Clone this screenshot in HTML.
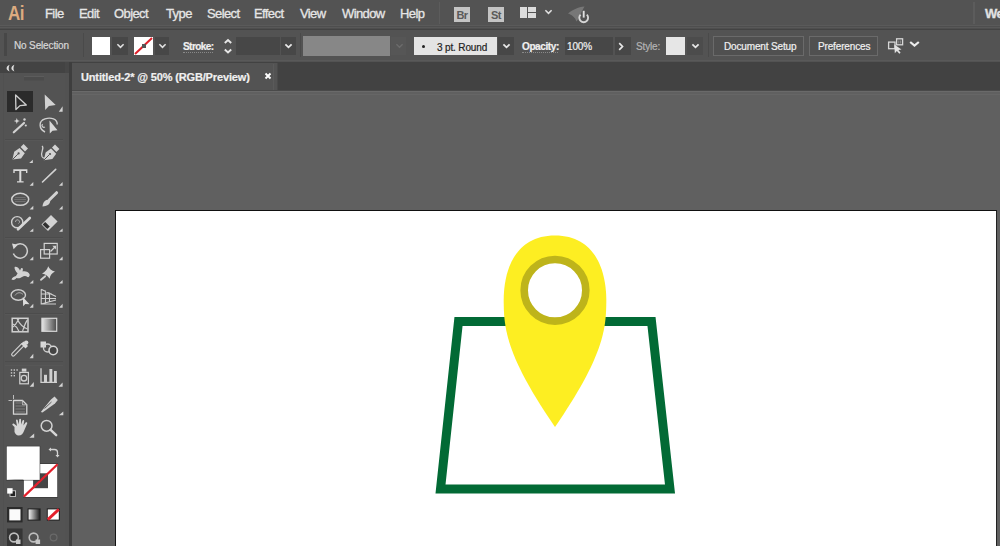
<!DOCTYPE html>
<html><head><meta charset="utf-8">
<style>
*{margin:0;padding:0;box-sizing:border-box}
html,body{width:1000px;height:546px;overflow:hidden}
body{background:#535353;font-family:"Liberation Sans",sans-serif;position:relative;color:#e8e8e8}
.a{position:absolute}
.m{position:absolute;top:6px;font-size:13px;line-height:16px;color:#e6e6e6;white-space:nowrap;letter-spacing:-0.6px;-webkit-text-stroke:0.3px #e6e6e6}
.c{position:absolute;font-size:10px;line-height:12px;color:#e8e8e8;white-space:nowrap;letter-spacing:-0.15px;-webkit-text-stroke:0.2px currentColor}
.dk{position:absolute;background:#474747}
svg{position:absolute;overflow:visible}
</style></head><body>

<!-- ===== MENU BAR ===== -->
<div class="a" style="left:0;top:0;width:1000px;height:25px;background:#535353"></div>
<div class="a" style="left:0;top:25px;width:1000px;height:1px;background:#5a5a5a"></div>
<div class="a" style="left:0;top:26px;width:1000px;height:1px;background:#4e4e4e"></div>
<div class="a" style="left:0;top:27px;width:1000px;height:1px;background:#585858"></div>
<div class="a" style="left:0;top:28px;width:1000px;height:1px;background:#4e4e4e"></div>
<div class="a" style="left:0;top:29px;width:1000px;height:1px;background:#434343"></div>

<div class="a" style="left:8px;top:2px;font-size:20px;line-height:22px;color:#dcab80;font-weight:bold;letter-spacing:-0.5px;transform:scaleX(0.85);transform-origin:0 0">Ai</div>
<div class="m" style="left:45px">File</div>
<div class="m" style="left:79px">Edit</div>
<div class="m" style="left:114px">Object</div>
<div class="m" style="left:166px">Type</div>
<div class="m" style="left:207px">Select</div>
<div class="m" style="left:254px">Effect</div>
<div class="m" style="left:300px">View</div>
<div class="m" style="left:342px">Window</div>
<div class="m" style="left:400px">Help</div>
<div class="a" style="left:439px;top:2px;width:1px;height:22px;background:#5c5c5c"></div>

<!-- Br / St -->
<div class="a" style="left:454px;top:7px;width:16px;height:15px;background:#c4c4c4;color:#5a5a5a;font-size:11px;line-height:16px;text-align:center;font-weight:bold;letter-spacing:-0.5px">Br</div>
<div class="a" style="left:488px;top:7px;width:16px;height:15px;background:#c4c4c4;color:#5a5a5a;font-size:11px;line-height:16px;text-align:center;font-weight:bold;letter-spacing:-0.5px">St</div>
<!-- layout icon -->
<div class="a" style="left:520px;top:7px;width:7px;height:11px;background:#dcdcdc"></div>
<div class="a" style="left:528px;top:7px;width:8px;height:5px;background:#dcdcdc"></div>
<div class="a" style="left:528px;top:13px;width:8px;height:5px;background:#dcdcdc"></div>
<svg style="left:544px;top:9px" width="9" height="6"><path d="M1.4 1.3 L4.5 4.3 L7.6 1.3" stroke="#e0e0e0" stroke-width="1.6" fill="none"/></svg>
<!-- sync icon -->
<svg style="left:560px;top:2px" width="36" height="24">
 <path d="M8 11.5 C12 8 18 5 24.5 4.5 L22 9 L19 16 L16.5 19.5 C15 15 12 13 8 11.5Z" fill="#777"/>
 <path d="M20.6 12.7 A4.4 4.4 0 1 0 26.8 12.7" stroke="#d6d6d6" stroke-width="1.9" fill="none"/>
 <path d="M23.7 8.8 V15.6" stroke="#e0e0e0" stroke-width="1.9"/>
</svg>

<div class="a" style="left:973px;top:2px;width:2px;height:22px;background:#5c5c5c"></div>
<div class="m" style="left:985px;font-weight:bold;color:#e0e0e0">We</div>

<!-- ===== CONTROL BAR ===== -->
<div class="a" style="left:0;top:30px;width:1000px;height:32px;background:#535353"></div>
<div class="a" style="left:0;top:60px;width:1000px;height:1px;background:#595959"></div>

<div class="a" style="left:4px;top:33px;width:3px;height:23px;background:#474747"></div>
<div class="c" style="left:14px;top:40px;color:#d8d8d8">No Selection</div>
<div class="a" style="left:83px;top:33px;width:1px;height:24px;background:#4a4a4a"></div>

<!-- fill swatch -->
<div class="a" style="left:92px;top:37px;width:18px;height:18px;background:#fff"></div>
<div class="dk" style="left:112px;top:37px;width:16px;height:18px"></div>
<svg style="left:116px;top:43px" width="9" height="6"><path d="M1.4 1.3 L4.5 4.3 L7.6 1.3" stroke="#e0e0e0" stroke-width="1.6" fill="none"/></svg>
<!-- stroke swatch -->
<div class="a" style="left:134px;top:37px;width:19px;height:18px;background:#fff"></div>
<svg style="left:134px;top:37px" width="19" height="18"><path d="M1 17 L18 1" stroke="#e0202a" stroke-width="2"/><rect x="8" y="7" width="4" height="4" fill="#555"/></svg>
<div class="dk" style="left:155px;top:37px;width:14px;height:18px"></div>
<svg style="left:158px;top:43px" width="9" height="6"><path d="M1.4 1.3 L4.5 4.3 L7.6 1.3" stroke="#e0e0e0" stroke-width="1.6" fill="none"/></svg>

<div class="c" style="left:183px;top:41px;font-weight:bold;color:#f0f0f0;letter-spacing:-0.55px">Stroke:</div>
<div class="a" style="left:183px;top:52px;width:30px;border-top:1px dotted #888"></div>
<svg style="left:223px;top:38px" width="10" height="18"><path d="M1.8 5 L5 2 L8.2 5 M1.8 11.5 L5 14.5 L8.2 11.5" stroke="#e6e6e6" stroke-width="1.9" fill="none"/></svg>
<div class="dk" style="left:236px;top:37px;width:44px;height:18px"></div>
<div class="dk" style="left:281px;top:37px;width:15px;height:18px;background:#474747"></div>
<svg style="left:284px;top:43px" width="9" height="6"><path d="M1.4 1.3 L4.5 4.3 L7.6 1.3" stroke="#e8e8e8" stroke-width="1.8" fill="none"/></svg>
<div class="a" style="left:300px;top:33px;width:1px;height:24px;background:#4a4a4a"></div>

<div class="a" style="left:303px;top:36px;width:87px;height:20px;background:#878787"></div>
<div class="a" style="left:391px;top:37px;width:15px;height:18px;background:#565656"></div>
<svg style="left:395px;top:43px" width="9" height="6"><path d="M1.4 1.3 L4.5 4.3 L7.6 1.3" stroke="#6c6c6c" stroke-width="1.4" fill="none"/></svg>

<div class="a" style="left:414px;top:37px;width:83px;height:18px;background:#e4e4e4"></div>
<div class="a" style="left:422px;top:45px;width:3px;height:3px;border-radius:2px;background:#222"></div>
<div class="c" style="left:437px;top:42px;color:#222">3 pt. Round</div>
<div class="dk" style="left:498px;top:37px;width:16px;height:18px"></div>
<svg style="left:502px;top:43px" width="9" height="6"><path d="M1.4 1.3 L4.5 4.3 L7.6 1.3" stroke="#e8e8e8" stroke-width="1.8" fill="none"/></svg>

<div class="c" style="left:522px;top:41px;font-weight:bold;color:#f0f0f0;letter-spacing:-0.4px">Opacity:</div>
<div class="a" style="left:522px;top:52px;width:36px;border-top:1px dotted #888"></div>
<div class="dk" style="left:565px;top:37px;width:48px;height:18px"></div>
<div class="c" style="left:567px;top:41px;color:#f0f0f0">100%</div>
<div class="dk" style="left:615px;top:37px;width:16px;height:18px"></div>
<svg style="left:618px;top:42px" width="6" height="9"><path d="M1.2 1.2 L4.5 4.5 L1.2 7.8" stroke="#e8e8e8" stroke-width="1.7" fill="none"/></svg>
<div class="c" style="left:636px;top:41px;color:#b4b4b4">Style:</div>
<div class="a" style="left:666px;top:37px;width:19px;height:18px;background:#e6e6e6"></div>
<div class="dk" style="left:687px;top:37px;width:16px;height:18px;background:#4c4c4c"></div>
<svg style="left:691px;top:43px" width="9" height="6"><path d="M1.4 1.3 L4.5 4.3 L7.6 1.3" stroke="#e8e8e8" stroke-width="1.8" fill="none"/></svg>
<div class="a" style="left:708px;top:33px;width:1px;height:24px;background:#4a4a4a"></div>

<div class="a" style="left:713px;top:36px;width:91px;height:20px;border:1px solid #6a6a6a;background:#505050"></div>
<div class="c" style="left:724px;top:41px;color:#f0f0f0">Document Setup</div>
<div class="a" style="left:809px;top:36px;width:69px;height:20px;border:1px solid #6a6a6a;background:#505050"></div>
<div class="c" style="left:818px;top:41px;color:#f0f0f0">Preferences</div>
<svg style="left:880px;top:32px" width="44" height="26">
 <rect x="8.6" y="10.1" width="6.4" height="6.6" stroke="#d6d6d6" stroke-width="1.3" fill="none"/>
 <rect x="16.6" y="6.8" width="6" height="6" stroke="#d6d6d6" stroke-width="1.3" fill="none"/>
 <path d="M18.8 8.5 V11.5 M20.6 8.5 V11.5" stroke="#9a9a9a" stroke-width="0.8"/>
 <path d="M14.3 12.4 L14.8 21.2 L16.9 19 L19.3 21.8 L20.6 20.7 L18.4 18 L21.5 17.6 Z" fill="#e2e2e2"/>
 <path d="M30.2 10 L34.5 13.6 L38.8 10" stroke="#ececec" stroke-width="2.2" fill="none"/>
</svg>

<!-- ===== TAB BAR ===== -->
<div class="a" style="left:65px;top:62px;width:935px;height:28px;background:#424242"></div>
<div class="a" style="left:72px;top:63px;width:206px;height:27px;background:#535353"></div>
<div class="c" style="left:81px;top:70px;font-size:11px;line-height:14px;font-weight:bold;color:#f0f0f0">Untitled-2* @ 50% (RGB/Preview)</div>
<svg style="left:264px;top:72px" width="8" height="8"><path d="M1.5 1.5 L6.5 6.5 M6.5 1.5 L1.5 6.5" stroke="#fff" stroke-width="1.9"/></svg>
<div class="a" style="left:273px;top:64px;width:1px;height:26px;background:#5a5a5a"></div>
<div class="a" style="left:277px;top:63px;width:1px;height:27px;background:#4a4a4a"></div>
<div class="a" style="left:65px;top:90px;width:935px;height:1px;background:#4a4a4a"></div>

<!-- ===== CANVAS ===== -->
<div class="a" style="left:72px;top:91px;width:928px;height:455px;background:#606060"></div>
<div class="a" style="left:72px;top:91px;width:928px;height:1px;background:#6a6a6a"></div>
<div class="a" style="left:72px;top:94px;width:928px;height:1px;background:#666"></div>
<div class="a" style="left:115px;top:210px;width:882px;height:340px;background:#fff;border-left:1px solid #111;border-top:1px solid #111;border-right:1px solid #222"></div>

<!-- artwork -->
<svg style="left:0;top:0" width="1000" height="546">
 <path d="M458.5 321.5 L651.5 321.5 L670 489 L440.5 489 Z" stroke="#026a35" stroke-width="9" fill="none" stroke-linejoin="miter"/>
 <path d="M555 427 C603.74 355.85 606.3 328.86 606.3 300 C606.3 282.7 601.95 235.4 555 235.4 C508.05 235.4 503.7 282.7 503.7 300 C503.7 328.86 506.26 355.85 555 427 Z" fill="#fdee22"/>
 <circle cx="555" cy="290.3" r="30.8" stroke="#beb41a" stroke-width="7.6" fill="#fff"/>
</svg>

<!-- ===== LEFT TOOL PANEL ===== -->
<div class="a" style="left:0;top:62px;width:65px;height:484px;background:#535353"></div>
<div class="a" style="left:0;top:62px;width:65px;height:11px;background:#434343"></div>
<div class="a" style="left:65px;top:73px;width:4px;height:473px;background:#525252"></div>
<div class="a" style="left:65px;top:62px;width:4px;height:11px;background:#474747"></div>
<div class="a" style="left:69px;top:62px;width:3px;height:484px;background:#3e3e3e"></div>
<div class="a" style="left:3px;top:73px;width:1px;height:473px;background:#505050"></div>
<svg style="left:0;top:0" width="72" height="546">
 <defs>
  <linearGradient id="gr" x1="0" x2="1" y1="0" y2="0"><stop offset="0" stop-color="#e8e8e8"/><stop offset="1" stop-color="#4a4a4a"/></linearGradient>
  <linearGradient id="gr2" x1="0" x2="1" y1="0" y2="0"><stop offset="0" stop-color="#f0f0f0"/><stop offset="1" stop-color="#222"/></linearGradient>
 </defs>
 <!-- header chevrons -->
 <path d="M9.6 64.8 C5.6 66.5 5.6 70 9.6 71.6 C8.4 69.5 8.4 66.9 9.6 64.8 Z M14.4 64.8 C10.4 66.5 10.4 70 14.4 71.6 C13.2 69.5 13.2 66.9 14.4 64.8 Z" fill="#e0e0e0"/>
 <!-- grip -->
 <rect x="24" y="76" width="20" height="4.5" fill="#4c4c4c"/><path d="M24 76.5 H44" stroke="#5c5c5c" stroke-width="1"/>
 <g fill="#d2d2d2" stroke="none">
  <!-- triangles -->
  <path d="M62.6 106.3 V111.8 H58.8 Z"/>
  <path d="M32.8 159.7 V163 H29.2 Z"/>
  <path d="M33.3 182 V185.8 H29.6 Z"/><path d="M62.6 182 V185.8 H59 Z"/>
  <path d="M33.3 205.7 V209.4 H29.6 Z"/><path d="M62.6 205.7 V209.4 H59 Z"/>
  <path d="M33.3 228.6 V231.8 H29.6 Z"/><path d="M62.6 228.6 V231.8 H59 Z"/>
  <path d="M33.3 256.6 V260.3 H29.6 Z"/><path d="M62.6 256.6 V260.3 H59 Z"/>
  <path d="M33.3 280 V283.6 H29.6 Z"/><path d="M62.6 280 V283.6 H59 Z"/>
  <path d="M33.3 303.7 V307.8 H29.6 Z"/><path d="M62.6 303.7 V307.8 H59 Z"/>
  <path d="M33.3 353.7 V358.3 H29.6 Z"/>
  <path d="M33.8 382 V386.7 H29.7 Z"/><path d="M62.6 382.6 V386.7 H58.5 Z"/>
  <path d="M63.3 411.5 V415.3 H58.8 Z"/>
  <path d="M34.2 433.5 V437.8 H29.3 Z"/>
 </g>
 <!-- separators -->
 <g stroke="#4c4c4c" stroke-width="1">
  <path d="M5 139.5 H63"/><path d="M5 237.5 H63"/><path d="M5 313.5 H63"/><path d="M5 361.5 H63"/>
 </g>
 <g stroke="#575757" stroke-width="1">
  <path d="M5 140.5 H63"/><path d="M5 238.5 H63"/><path d="M5 314.5 H63"/><path d="M5 365.5 H63"/>
 </g>
 <!-- selection -->
 <rect x="7" y="91" width="26" height="21" fill="#2b2b2b"/>
 <path d="M15.6 95 L15.9 109.5 L20 105.6 L26.3 105 Z" stroke="#cfcfcf" stroke-width="1.3" fill="none" stroke-linejoin="round"/>
 <path d="M44.7 94.4 L45.2 110 L48.9 105.9 L55.7 105 Z" fill="#d2d2d2"/>
 <!-- magic wand -->
 <path d="M13.8 132.3 L24 123" stroke="#d2d2d2" stroke-width="2.2" stroke-linecap="round"/>
 <path d="M16.8 118 L17.6 120.2 L19.8 121 L17.6 121.8 L16.8 124 L16 121.8 L13.8 121 L16 120.2 Z" fill="#d8d8d8"/>
 <circle cx="24.5" cy="119.5" r="1.2" fill="#d2d2d2"/><circle cx="25.8" cy="125.5" r="1.1" fill="#d2d2d2"/>
 <!-- lasso -->
 <path d="M45 132 C39 129 38 121 45 118.8 C51 117 57.5 119 57.2 124.5" stroke="#cfcfcf" stroke-width="1.4" fill="none"/>
 <path d="M42.5 124 C41 126 43 128 45 127" stroke="#cfcfcf" stroke-width="1.2" fill="none"/>
 <path d="M49.5 120.5 L49.8 133.5 L52.5 130.8 L57.5 130.3 Z" fill="#d8d8d8"/>
 <!-- pen -->
 <path d="M12.4 159.6 L14.2 151.8 L19.6 148 L24.8 153.2 L21 158.4 Z" fill="#d2d2d2"/>
 <path d="M20.6 147 L23.6 144 L28 148.4 L25 151.4 Z" fill="#d2d2d2"/>
 <path d="M12.6 159.4 L17.8 154.2" stroke="#535353" stroke-width="1"/><circle cx="18.6" cy="153.4" r="1.1" fill="#535353"/>
 <!-- curvature pen -->
 <path d="M42 146 C45 148 40 152 42 156.5 C43 158.5 45 158.5 46 157.5" stroke="#cfcfcf" stroke-width="1.3" fill="none"/>
 <path d="M43.8 160.2 L45.6 152.4 L51 148.6 L56.2 153.8 L52.4 159 Z" fill="#d2d2d2"/>
 <path d="M52 147.6 L55 144.6 L59.4 149 L56.4 152 Z" fill="#d2d2d2"/>
 <path d="M44 160 L49.2 154.8" stroke="#535353" stroke-width="1"/><circle cx="50" cy="154" r="1.1" fill="#535353"/>
 <!-- type -->
 <path d="M13.3 169.3 H27.4 V173 H26 V170.9 H21.3 V181.2 H23.6 V182.6 H17 V181.2 H19.3 V170.9 H14.7 V173 H13.3 Z" fill="#dadada"/>
 <!-- line -->
 <path d="M42.5 182 L55.7 169.3" stroke="#d2d2d2" stroke-width="1.6" stroke-linecap="round"/>
 <!-- ellipse -->
 <ellipse cx="20.2" cy="199.3" rx="8.5" ry="6" stroke="#d2d2d2" stroke-width="1.5" fill="none"/>
 <path d="M15 197.5 H25.5 M14.2 199.5 H26 M15 201.5 H25.5" stroke="#777" stroke-width="0.8"/>
 <!-- brush -->
 <path d="M49.5 199.8 L56.6 192.7" stroke="#d2d2d2" stroke-width="3" stroke-linecap="round"/>
 <path d="M42.5 206.6 C42.8 202.5 45 199.8 48.8 199.6 L50.2 201.1 C50 204.6 46.8 206.4 42.5 206.6 Z" fill="#d2d2d2"/>
 <!-- shaper -->
 <circle cx="17.2" cy="222.2" r="5.6" stroke="#cfcfcf" stroke-width="1.4" fill="none"/>
 <path d="M15.5 222 A2 2 0 1 1 18.5 223.5" stroke="#aaa" stroke-width="1" fill="none"/>
 <path d="M18 229.3 L29.8 218" stroke="#d6d6d6" stroke-width="2.6" stroke-linecap="round"/>
 <!-- eraser -->
 <path d="M41.5 224.5 L51 215 L57.6 221.5 L48 231 Z" fill="#d2d2d2"/>
 <path d="M42.6 224.5 L45.2 221.9 L49.8 226.5 L47.2 229.1 Z" fill="#303030"/>
 <!-- rotate -->
 <path d="M14.5 246.5 A7.2 7.2 0 1 1 13.4 253.5" stroke="#cfcfcf" stroke-width="1.5" fill="none"/>
 <path d="M12 243.5 L17.8 244.8 L13.6 249.2 Z" fill="#d8d8d8"/>
 <!-- scale -->
 <rect x="44.2" y="243.4" width="13" height="10.6" stroke="#d2d2d2" stroke-width="1.2" fill="none"/>
 <rect x="40.6" y="249.6" width="9" height="8.6" stroke="#d2d2d2" stroke-width="1.2" fill="none"/>
 <path d="M50.5 251.5 L55 247" stroke="#d2d2d2" stroke-width="1.2"/><path d="M56 245.8 L56 249.5 L52.3 245.8 Z" fill="#d2d2d2"/>
 <!-- warp (puppet) -->
 <path d="M11.5 279.5 C12 277.5 14 276.5 16 276 L17.6 273.2 C15.8 271.6 14.2 269 14.6 266.9 C16.8 266.4 19 268 20 270.5 L21.2 268 L23 268.4 L22.6 271.4 C25.2 270.8 28.6 271.6 29.6 274.2 C30 276.2 28.6 277.6 27.4 277 C26 275.6 24 275.6 22 277 C20 278.5 18 278.5 16.6 278 C15 279.5 13.5 280.6 11.5 279.5 Z" fill="#d2d2d2"/>
 <!-- pushpin -->
 <path d="M48.3 266.2 Q49.6 270.2 55 271.6 Q50.6 273.6 49.5 278.7 Q47.6 275 42 273.6 Q46.6 271 48.3 266.2 Z" fill="#d6d6d6"/>
 <path d="M45.2 276.2 L41 279.8" stroke="#d2d2d2" stroke-width="1.8" stroke-linecap="round"/>
 <!-- shape builder -->
 <ellipse cx="18.3" cy="295" rx="7.2" ry="5.2" stroke="#cfcfcf" stroke-width="1.4" fill="none"/>
 <path d="M15 295.5 C17 292 21 292 23 294.5" stroke="#aaa" stroke-width="1" fill="none"/>
 <path d="M22.8 297 L23.2 306.2 L25.3 304 L29.5 304.2 Z" fill="#dcdcdc"/>
 <!-- perspective grid -->
 <path d="M41.2 289.3 V304 H56 M41.2 289.3 L56 296.5 M41.2 304 L56 300 M45.5 290.5 V303.5 M49.5 292.5 V302.5 M41.2 294 H52 M41.2 298.5 H56" stroke="#cfcfcf" stroke-width="1.1" fill="none"/>
 <!-- mesh -->
 <rect x="12.2" y="318.3" width="15.8" height="13.5" stroke="#d2d2d2" stroke-width="1.5" fill="none"/>
 <path d="M17 318.5 C19 323 22 327 27.5 329 M13 324 C16 326 18 329 19 331.5 M19 318.5 C17 322 16 325 13 327 M27.5 320 C25 323 24 327 22.5 331.5" stroke="#cdcdcd" stroke-width="1.2" fill="none"/>
 <!-- gradient -->
 <rect x="41.9" y="318.3" width="14.8" height="13" stroke="#d8d8d8" stroke-width="1.2" fill="url(#gr)"/>
 <!-- eyedropper -->
 <path d="M13.2 354.5 L22.5 345" stroke="#cfcfcf" stroke-width="4.2" stroke-linecap="round"/>
 <path d="M13.2 354.5 L22.5 345" stroke="#535353" stroke-width="1.8" stroke-linecap="round"/>
 <path d="M23.5 341.5 L28 346 L25.5 348.5 L21 344 Z" fill="#d8d8d8"/><circle cx="26.2" cy="342.6" r="2.2" fill="#d8d8d8"/>
 <!-- blend -->
 <rect x="40.5" y="341.5" width="5.5" height="6" fill="#d8d8d8"/>
 <circle cx="47.5" cy="348" r="4" stroke="#cfcfcf" stroke-width="1.4" fill="none"/>
 <circle cx="53.2" cy="350.5" r="4.2" stroke="#d6d6d6" stroke-width="1.6" fill="#444"/>
 <!-- symbol sprayer -->
 <g fill="#cfcfcf"><rect x="10.8" y="369.3" width="1.4" height="1.4"/><rect x="13.6" y="369.3" width="1.4" height="1.4"/><rect x="16.4" y="369.3" width="1.4" height="1.4"/><rect x="10.8" y="372.2" width="1.4" height="1.4"/><rect x="13.6" y="372.2" width="1.4" height="1.4"/><rect x="10.8" y="375" width="1.4" height="1.4"/><rect x="13.6" y="375" width="1.4" height="1.4"/></g>
 <rect x="19.8" y="372.4" width="8.6" height="11.4" stroke="#d2d2d2" stroke-width="1.2" fill="none"/>
 <rect x="21.8" y="368.6" width="4.6" height="3" fill="#d2d2d2"/>
 <circle cx="24" cy="378.2" r="2.8" stroke="#cfcfcf" stroke-width="1.3" fill="none"/>
 <!-- graph -->
 <path d="M41 368.2 V382.4 H57" stroke="#d2d2d2" stroke-width="1.3" fill="none"/>
 <rect x="44" y="374.8" width="3" height="7.2" fill="#d0d0d0"/><rect x="49.4" y="369" width="2.9" height="13" fill="#d0d0d0"/><rect x="54" y="371" width="2.8" height="11" fill="#d0d0d0"/>
 <!-- artboard -->
 <path d="M13.5 400.5 H22.5 L26.8 404.8 V414.2 H13.5 Z" stroke="#d6d6d6" stroke-width="1.3" fill="none"/>
 <path d="M13.5 395 V399 M8.5 400.5 H12 M22.5 400.5 V404.8 H26.8" stroke="#bdbdbd" stroke-width="1" fill="none"/>
 <path d="M15.5 403 H24 M15.5 406 H25 M15.5 409 H25 M15.5 412 H25" stroke="#888" stroke-width="0.8"/>
 <!-- slice/knife -->
 <path d="M40.8 412 L51 399.5 L54.5 396.5 L57.8 400 L55 403.5 L42.5 412.5 Z" fill="#d2d2d2"/>
 <path d="M44.5 408.5 L51.5 402" stroke="#535353" stroke-width="0.9"/>
 <!-- hand -->
 <path d="M14.5 427 L12.5 425 C12 424 13 423 14 423.7 L17 426 L16 420.5 C16 419.3 17.6 419.3 17.8 420.5 L18.8 424.5 L19.2 419.6 C19.3 418.5 21 418.5 21 419.6 L21.2 424.5 L22.5 420.5 C22.8 419.5 24.3 419.8 24.2 421 L23.4 425.5 L25.6 422.6 C26.3 421.9 27.6 422.6 27.2 423.5 L24.2 430.5 C23.2 433.5 21.5 435.6 18.5 435.6 C16.5 435.6 15.5 434 14.5 432 Z" fill="#d6d6d6"/>
 <!-- zoom -->
 <circle cx="46.6" cy="425.8" r="5.4" stroke="#d2d2d2" stroke-width="1.5" fill="none"/>
 <path d="M50.6 429.8 L56.2 435.2" stroke="#d6d6d6" stroke-width="2.4" stroke-linecap="round"/>
 <!-- fill / stroke -->
 <rect x="23.3" y="463.5" width="34.6" height="34" fill="#2e2e2e"/><rect x="23.8" y="464" width="33.5" height="33" fill="#fff"/>
 <rect x="33.1" y="473.3" width="14.9" height="14.9" fill="#454545"/>
 <path d="M23.8 496.6 L57.6 464.2" stroke="#e4202c" stroke-width="2.2"/>
 <rect x="6.2" y="445.9" width="34" height="34.5" fill="#2e2e2e"/><rect x="6.7" y="446.4" width="33" height="33.5" fill="#fff"/>
 <path d="M6.5 479.7 H23.4 V480.2" stroke="#535353" stroke-width="0"/>
 <!-- swap -->
 <path d="M50 449.5 H54.5 C56.5 449.5 57.5 450.5 57.5 452.5 V456" stroke="#d2d2d2" stroke-width="1.3" fill="none"/>
 <path d="M48.5 449.5 L51 447.5 V451.5 Z M57.5 457.5 L55.5 455 H59.5 Z" fill="#d2d2d2"/>
 <!-- default -->
 <rect x="10" y="490.8" width="5.6" height="5.6" fill="#222" stroke="#ddd" stroke-width="0.8"/>
 <rect x="7.2" y="488.2" width="5.4" height="5.4" fill="#fff"/>
 <!-- color modes -->
 <rect x="7" y="507" width="15.6" height="15.4" fill="#2b2b2b"/>
 <rect x="9.3" y="509.2" width="11.2" height="11.2" fill="#fafafa"/>
 <rect x="27.6" y="508.4" width="13" height="12.2" fill="#202020"/>
 <rect x="28.6" y="509.4" width="11" height="10.2" fill="url(#gr2)"/>
 <rect x="46.8" y="508.4" width="13" height="12.2" fill="#202020"/>
 <rect x="47.8" y="509.4" width="11" height="10.2" fill="#fff"/>
 <path d="M47.8 519.6 L58.8 509.4" stroke="#e4202c" stroke-width="2.8"/>
 <!-- draw modes -->
 <rect x="7" y="528.5" width="15.6" height="17.5" fill="#353535"/>
 <circle cx="14" cy="537.5" r="4.4" stroke="#bdbdbd" stroke-width="1.6" fill="none"/><rect x="16" y="539.5" width="4.5" height="4.5" fill="#c8c8c8"/>
 <circle cx="33.6" cy="537.5" r="4.4" stroke="#bdbdbd" stroke-width="1.6" fill="none"/><rect x="35.6" y="539.5" width="4.5" height="4.5" fill="#c8c8c8"/>
 <circle cx="53.6" cy="537.5" r="3.4" stroke="#6a6a6a" stroke-width="1.2" fill="none"/>
</svg>
</body></html>
